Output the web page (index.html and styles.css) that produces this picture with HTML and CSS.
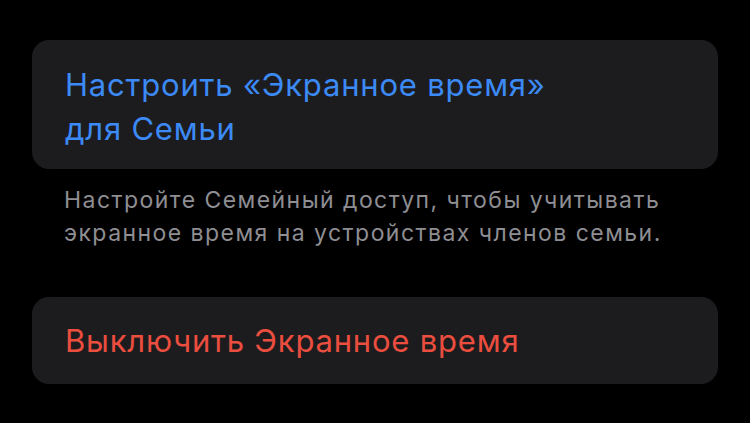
FILE: index.html
```html
<!DOCTYPE html>
<html lang="ru">
<head>
    <meta charset="UTF-8">
    <meta name="viewport" content="width=device-width, initial-scale=1.0">
    <title>Экранное время</title>
    <link rel="stylesheet" href="styles.css">
</head>
<body>
    <div class="settings">
        <div class="group">
            <div class="cell first">
                <a class="action blue" href="#">Настроить «Экранное время»<br>для Семьи</a>
            </div>
        </div>
        <p class="footer">Настройте Семейный доступ, чтобы учитывать<br>экранное время на устройствах членов семьи.</p>

        <div class="group">
            <div class="cell">
                <a class="action red" href="#">Выключить Экранное время</a>
            </div>
        </div>
    </div>
</body>
</html>
```

FILE: styles.css
```css
body {
    margin: 0;
    background-color: #000;
    font-family: 'Inter', 'Roboto', sans-serif;
    -webkit-font-smoothing: antialiased;
}

.settings {
    padding: 40px 32px 0 32px;
}

.group {
    background-color: #1c1c1e;
    border-radius: 17px;
    overflow: hidden;
}

.cell {
    padding: 22px 33px 21px 33px;
}

.cell.first {
    padding: 23px 33px 18px 33px;
}

.action {
    display: block;
    font-size: 31px;
    line-height: 44px;
    text-decoration: none;
    letter-spacing: 0.8px;
}

.blue {
    color: #3c8af6;
}

.red {
    color: #eb4e3f;
}

.footer {
    margin: 0;
    padding: 15px 33px 47px 32px;
    font-size: 23px;
    line-height: 33px;
    color: #8e8e93;
    letter-spacing: 1.45px;
}
```
